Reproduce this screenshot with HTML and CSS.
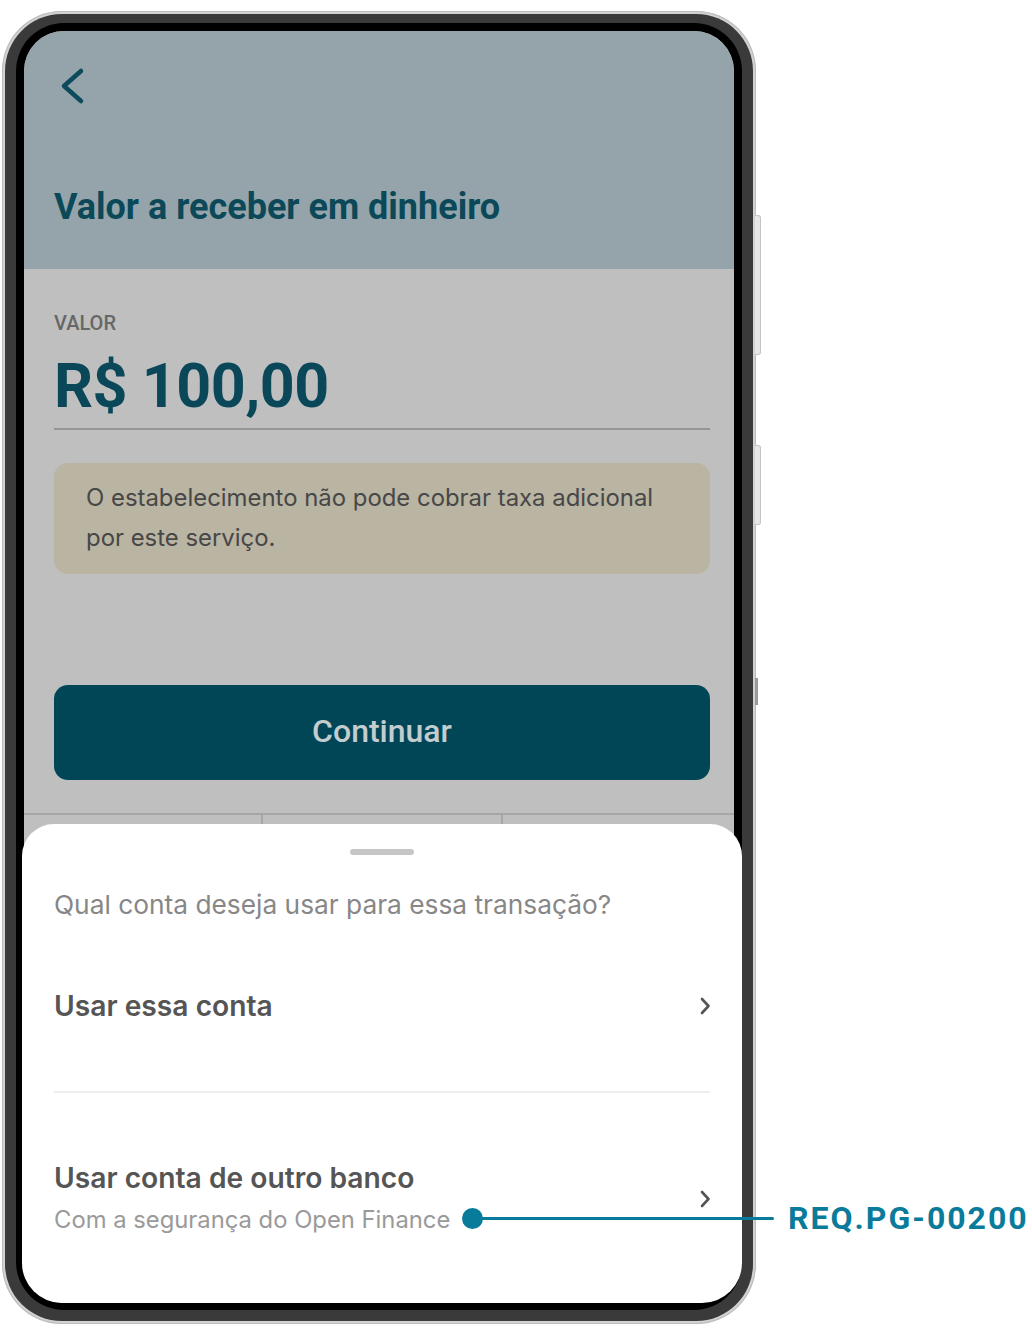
FILE: index.html
```html
<!DOCTYPE html>
<html lang="pt-BR">
<head>
<meta charset="utf-8">
<title>Valor a receber em dinheiro</title>
<link rel="stylesheet" href="styles.css">
</head>
<body>
<div class="page">
  <div class="phone">
    <span class="side-btn side-btn-1"></span>
    <span class="side-btn side-btn-2"></span>
    <span class="side-nub"></span>
    <div class="bezel">
      <div class="bezel-inner">
        <div class="screen">
          <header class="header">
            <svg class="back" width="30" height="40" viewBox="0 0 30 40" aria-hidden="true">
              <path d="M25 5 L8 20 L25 35" fill="none" stroke="#0c4b5b" stroke-width="4.5" stroke-linecap="round" stroke-linejoin="round"/>
            </svg>
            <h1 class="title">Valor a receber em dinheiro</h1>
          </header>
          <main class="content">
            <div class="label">VALOR</div>
            <div class="amount">R$ 100,00</div>
            <div class="underline"></div>
            <div class="notice">O estabelecimento não pode cobrar taxa adicional por este serviço.</div>
            <button class="primary">Continuar</button>
            <div class="keys">
              <div class="key"></div>
              <div class="key"></div>
              <div class="key"></div>
            </div>
          </main>
          <section class="sheet">
            <div class="handle"></div>
            <p class="question">Qual conta deseja usar para essa transação?</p>
            <div class="option option-first">
              <div class="option-text">
                <div class="option-title">Usar essa conta</div>
              </div>
              <svg class="chev" width="14" height="20" viewBox="0 0 14 20" aria-hidden="true"><path d="M4 3 L10.5 10 L4 17" fill="none" stroke="#555" stroke-width="2.6" stroke-linecap="round" stroke-linejoin="round"/></svg>
            </div>
            <div class="option option-second">
              <div class="option-text">
                <div class="option-title">Usar conta de outro banco</div>
                <div class="option-sub">Com a segurança do Open Finance</div>
              </div>
              <svg class="chev" width="14" height="20" viewBox="0 0 14 20" aria-hidden="true"><path d="M4 3 L10.5 10 L4 17" fill="none" stroke="#555" stroke-width="2.6" stroke-linecap="round" stroke-linejoin="round"/></svg>
            </div>
          </section>
        </div>
      </div>
    </div>
  </div>
  <div class="annotation">
    <span class="dot"></span>
    <span class="lead"></span>
    <span class="req">REQ.PG-00200</span>
  </div>
</div>
</body>
</html>
```

FILE: styles.css
```css
* { box-sizing: border-box; }
html, body { margin: 0; padding: 0; background: #ffffff; }
body { width: 1032px; height: 1336px; overflow: hidden; font-family: "Inter", "Roboto", sans-serif; }

.page { position: relative; width: 1032px; height: 1336px; padding: 11px 0 0 2px; }

.phone {
  position: relative;
  width: 754px;
  height: 1313px;
  border-radius: 60px;
  background: #d2d2d2;
  padding: 3px;
  box-shadow: inset 0 0 0 1px #bcbcbc;
}
.bezel {
  height: 100%;
  border-radius: 57px;
  background: #3a3a3a;
  padding: 9px 11px 11px 11px;
}
.bezel-inner {
  height: 100%;
  border-radius: 48px;
  background: #000;
  padding: 8px 8px 7px 8px;
}
.screen {
  position: relative;
  height: 100%;
  border-radius: 40px;
  background: #bfbfbf;
  display: flex;
  flex-direction: column;
}

.side-btn {
  position: absolute;
  right: -5px;
  width: 6px;
  background: #e6e6e6;
  border: 1px solid #c4c4c4;
  border-left: none;
  border-radius: 0 3px 3px 0;
}
.side-btn-1 { top: 204px; height: 140px; }
.side-btn-2 { top: 434px; height: 80px; }
.side-nub { position: absolute; right: -2px; top: 667px; width: 3px; height: 27px; background: #9a9a9a; }

.header {
  height: 238px;
  background: #94a4aa;
  border-radius: 40px 40px 0 0;
  padding: 35px 30px 0 32px;
  display: flex;
  flex-direction: column;
}
.back { display: block; }
.title {
  margin: 81px 0 0 -2px;
  font-family: "Roboto", sans-serif;
  font-weight: 700;
  font-size: 36px;
  line-height: 40px;
  color: #0b4858;
  letter-spacing: 0;
}

.content {
  flex: 1;
  display: flex;
  flex-direction: column;
  padding: 42px 24px 0 30px;
}
.label {
  font-family: "Roboto", sans-serif;
  font-weight: 500;
  font-size: 20px;
  line-height: 24px;
  color: #676767;
}
.amount {
  margin-top: 15px;
  font-family: "Roboto", sans-serif;
  font-weight: 700;
  font-size: 61px;
  line-height: 72px;
  color: #0a4859;
  letter-spacing: -0.5px;
}
.underline { margin-top: 6px; height: 2px; background: #959595; }
.notice {
  margin-top: 33px;
  background: #bab4a2;
  border-radius: 14px;
  padding: 15px 30px 16px 32px;
  font-family: "Inter", sans-serif;
  font-size: 23.9px;
  line-height: 40px;
  color: #474747;
}
.primary {
  margin-top: 111px;
  height: 95px;
  border: none;
  border-radius: 14px;
  background: #004656;
  color: #c3cccf;
  font-family: "Roboto", sans-serif;
  font-weight: 500;
  font-size: 32px;
  padding: 0 0 3px 0;
}
.keys {
  flex: 1;
  margin: 33px -24px 0 -30px;
  border-top: 2px solid #a6a6a6;
  display: grid;
  grid-template-columns: 237px 240px 1fr;
}
.key + .key { border-left: 2px solid #a6a6a6; }

.sheet {
  position: absolute;
  left: -2px;
  right: -8px;
  bottom: 0;
  height: 479px;
  background: #ffffff;
  border-radius: 32px 32px 40px 40px;
  padding: 25px 32px 0 32px;
  display: flex;
  flex-direction: column;
}
.handle { align-self: center; width: 64px; height: 6px; border-radius: 3px; background: #c6c6c6; }
.question {
  margin: 34px 0 0 0;
  font-family: "Inter", sans-serif;
  font-size: 26.3px;
  line-height: 32px;
  color: #878787;
}
.option { display: flex; align-items: center; justify-content: space-between; }
.option-first { height: 172px; border-bottom: 2px solid #eeeeee; }
.option-second { padding-top: 69px; }
.option-title {
  font-family: "Inter", sans-serif;
  font-weight: 600;
  font-size: 28.2px;
  line-height: 32px;
  color: #555555;
}
.option-sub {
  margin-top: 11px;
  font-family: "Inter", sans-serif;
  font-size: 23.8px;
  line-height: 30px;
  color: #9a9a9a;
}
.chev { display: block; margin-right: -2px; }

.annotation { position: absolute; left: 462px; top: 1200px; height: 36px; display: flex; align-items: center; }
.dot { width: 21px; height: 21px; border-radius: 50%; background: #087b9a; }
.lead { width: 293px; height: 3px; margin-left: -2px; background: #087b9a; border-radius: 2px; }
.req {
  margin-left: 14px;
  font-family: "Roboto", sans-serif;
  font-weight: 700;
  font-size: 32px;
  color: #0a7b9a;
  letter-spacing: 2px;
}
```
